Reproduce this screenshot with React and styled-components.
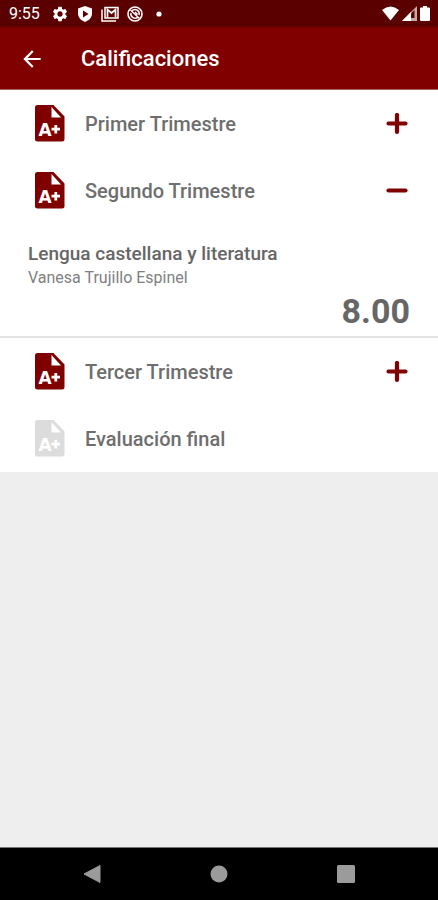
import React, { useState } from 'react';
import styled, { createGlobalStyle } from 'styled-components'
import { MdArrowBack, MdSettings } from 'react-icons/md'

const GlobalStyle = createGlobalStyle`
  * {
    box-sizing: border-box;
  }
  body {
    margin: 0;
    background-color: #eeeeee;
    font-family: Roboto, 'Liberation Sans', sans-serif;
  }
  button {
    font-family: inherit;
  }
`
const Screen = styled.div`
  display: flex;
  flex-direction: column;
  min-height: 100vh;
`
const StatusBar = styled.div`
  display: flex;
  align-items: center;
  justify-content: space-between;
  height: 27px;
  padding: 0 8px 0 9px;
  background-color: #5a0000;
  color: #ffffff;
`
const StatusGroup = styled.div`
  display: flex;
  align-items: center;
  gap: ${props => props.$gap};
  svg {
    display: block;
  }
`
const Clock = styled.time`
  width: 34px;
  font-size: 16px;
  line-height: 20px;
`
const AppBar = styled.header`
  display: flex;
  align-items: center;
  gap: 36px;
  height: 63px;
  padding: 2px 19px 0;
  background-color: #800000;
  border-bottom: 1px solid #a86060;
  color: #ffffff;
`
const BackButton = styled.button`
  display: flex;
  padding: 0;
  border: none;
  background: none;
  color: inherit;
  cursor: pointer;
`
const Title = styled.h1`
  margin: 0;
  font-size: 22px;
  line-height: 26px;
  font-weight: 500;
`
const Content = styled.main`
  flex: 1;
`
const TermRow = styled.button`
  display: flex;
  align-items: center;
  gap: 20px;
  width: 100%;
  height: 67px;
  padding: 0 30px 0 35px;
  border: none;
  background-color: #ffffff;
  color: #6e6e6e;
  font-size: 20px;
  line-height: 24px;
  font-weight: 500;
  text-align: left;
  cursor: ${props => props.disabled ? 'default' : 'pointer'};
`
const TermName = styled.span`
  flex: 1;
`
const Subject = styled.article`
  display: flex;
  flex-direction: column;
  padding: 18px 28px 6px;
  background-color: #ffffff;
  border-bottom: 2px solid #e2e2e2;
  color: #666666;
`
const SubjectName = styled.h2`
  margin: 0;
  font-size: 19px;
  line-height: 24px;
  font-weight: 500;
`
const Teacher = styled.p`
  margin: 0;
  color: #808080;
  font-size: 16px;
  line-height: 24px;
`
const Grade = styled.strong`
  align-self: flex-end;
  margin-top: 2px;
  font-size: 34px;
  line-height: 38px;
  font-weight: 700;
`
const NavBar = styled.nav`
  display: flex;
  align-items: center;
  justify-content: space-between;
  height: 53px;
  padding: 0 82px;
  background-color: #000000;
  border-top: 1px solid #777777;
`
const NavButton = styled.button`
  display: flex;
  padding: 0;
  border: none;
  background: none;
  color: #9b9b9b;
`

const GradeIcon = ({ color }) => (
  <svg width="30" height="37" viewBox="0 0 30 37" aria-hidden="true">
    <path d="M2.500 0H18.500L29.500 11.500V34a2.500 2.500 0 0 1-2.500 2.500H2.500a2.500 2.500 0 0 1-2.500-2.500V2.500a2.500 2.500 0 0 1 2.500-2.500Z" fill={color} />
    <path d="M16.500 2V12.500H26Z" fill="#ffffff" />
    <text x="3.500" y="31" fill="#ffffff" fontFamily="'DejaVu Sans', sans-serif" fontWeight="700" fontSize="17">A</text>
    <path d="M20.800 20V28.500M16.500 24.200H25" stroke="#ffffff" strokeWidth="2.800" />
  </svg>
)

const ToggleIcon = ({ open }) => (
  <svg width="22" height="22" viewBox="0 0 22 22" aria-hidden="true">
    <path d={open ? 'M2.500 10.500H19.500' : 'M2.500 10.500H19.500M11 2V19'} stroke="#800000" strokeWidth="4.200" strokeLinecap="round" />
  </svg>
)

const ShieldIcon = () => (
  <svg width="16" height="16" viewBox="0 0 16 16" aria-hidden="true">
    <path d="M8 0L15 2.500V7.500C15 11.500 12 14.500 8 16C4 14.500 1 11.500 1 7.500V2.500Z" fill="currentColor" />
    <path d="M6 4.500L11.500 8L6 11.500Z" fill="#5a0000" />
  </svg>
)

const MailIcon = () => (
  <svg width="18" height="16" viewBox="0 0 18 16" fill="none" stroke="currentColor" aria-hidden="true">
    <path d="M1 3.500V15H15" strokeWidth="1.500" />
    <path d="M4 1.500H17V12H4Z" strokeWidth="1.500" />
    <path d="M6.500 11.500V3.500L10.500 7L14.500 3.500V11.500" strokeWidth="1.700" />
  </svg>
)

const SyncIcon = () => (
  <svg width="16" height="16" viewBox="0 0 16 16" fill="none" stroke="currentColor" aria-hidden="true">
    <circle cx="8" cy="8" r="7" strokeWidth="1.600" />
    <path d="M5 4.800A4.200 4.200 0 0 1 12 9M11 11A4.200 4.200 0 0 1 4 7" strokeWidth="1.500" />
    <path d="M3.500 4L12.500 12.500M8 6L10.500 8.500" strokeWidth="1.500" />
  </svg>
)

const DotIcon = () => (
  <svg width="12" height="6" viewBox="0 0 12 6" aria-hidden="true">
    <circle cx="8" cy="3" r="2.600" fill="currentColor" />
  </svg>
)

const WifiIcon = () => (
  <svg width="17" height="15" viewBox="0 0 17 15" aria-hidden="true">
    <path d="M0 4Q8.500-3 17 4L8.500 14.500Z" fill="currentColor" />
  </svg>
)

const SignalIcon = () => (
  <svg width="15" height="15" viewBox="0 0 15 15" aria-hidden="true">
    <path d="M0 15L15 0V15Z" fill="#c9a8a8" />
    <path d="M0 15L9 6V15Z" fill="#ffffff" />
    <path d="M9 7.500L12.500 4V12H9Z" fill="#5a0000" />
  </svg>
)

const BatteryIcon = () => (
  <svg width="10" height="15" viewBox="0 0 10 15" aria-hidden="true">
    <path d="M3 0H7V1.500H9Q10 1.500 10 2.500V14Q10 15 9 15H1Q0 15 0 14V2.500Q0 1.500 1 1.500H3Z" fill="currentColor" />
  </svg>
)

const terms = [
  { name: 'Primer Trimestre', subjects: [] },
  {
    name: 'Segundo Trimestre',
    subjects: [{ name: 'Lengua castellana y literatura', teacher: 'Vanesa Trujillo Espinel', grade: '8.00' }]
  },
  { name: 'Tercer Trimestre', subjects: [] },
  { name: 'Evaluación final', subjects: [], disabled: true }
]

export default function App() {
  const [openTerm, setOpenTerm] = useState('Segundo Trimestre')

  const toggleTerm = (name) => {
    setOpenTerm(openTerm === name ? '' : name)
  }

  return (
    <Screen>
      <GlobalStyle />
      <StatusBar>
        <StatusGroup $gap="8px">
          <Clock>9:55</Clock>
          <MdSettings size={18} />
          <ShieldIcon />
          <MailIcon />
          <SyncIcon />
          <DotIcon />
        </StatusGroup>
        <StatusGroup $gap="3px">
          <WifiIcon />
          <SignalIcon />
          <BatteryIcon />
        </StatusGroup>
      </StatusBar>
      <AppBar>
        <BackButton aria-label="Volver">
          <MdArrowBack size={26} />
        </BackButton>
        <Title>Calificaciones</Title>
      </AppBar>
      <Content>
        {terms.map((term) => {
          const open = openTerm === term.name
          return (
            <section key={term.name}>
              <TermRow disabled={term.disabled} aria-expanded={open} onClick={() => toggleTerm(term.name)}>
                <GradeIcon color={term.disabled ? '#dcdcdc' : '#800000'} />
                <TermName>{term.name}</TermName>
                {!term.disabled && <ToggleIcon open={open} />}
              </TermRow>
              {open && term.subjects.map((subject) => (
                <Subject key={subject.name}>
                  <SubjectName>{subject.name}</SubjectName>
                  <Teacher>{subject.teacher}</Teacher>
                  <Grade>{subject.grade}</Grade>
                </Subject>
              ))}
            </section>
          )
        })}
      </Content>
      <NavBar>
        <NavButton aria-label="Atrás">
          <svg width="20" height="20" viewBox="0 0 20 20">
            <path d="M18 1.500V18.500L2 10Z" fill="currentColor" stroke="currentColor" strokeLinejoin="round" />
          </svg>
        </NavButton>
        <NavButton aria-label="Inicio">
          <svg width="20" height="20" viewBox="0 0 20 20">
            <circle cx="10" cy="10" r="8.500" fill="currentColor" />
          </svg>
        </NavButton>
        <NavButton aria-label="Recientes">
          <svg width="20" height="20" viewBox="0 0 20 20">
            <rect x="1" y="1" width="18" height="18" rx="1.500" fill="currentColor" />
          </svg>
        </NavButton>
      </NavBar>
    </Screen>
  )
}
